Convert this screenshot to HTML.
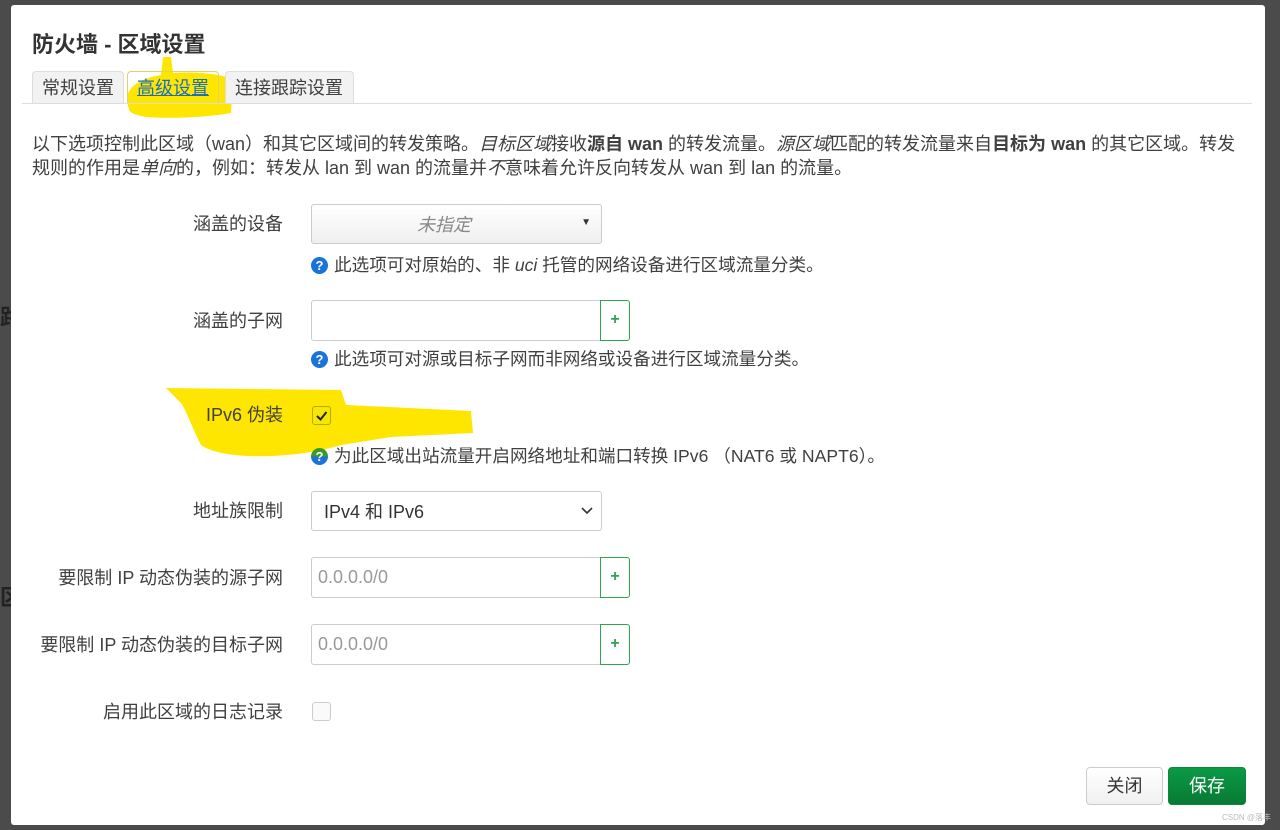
<!DOCTYPE html>
<html><head><meta charset="utf-8"><style>
*{box-sizing:border-box;margin:0;padding:0}
body{width:1280px;height:830px;background:#4b4b4b;position:relative;overflow:hidden;font-family:"Liberation Sans","Noto Sans CJK SC",sans-serif;color:#404040;font-size:18px}
.a{position:absolute;white-space:nowrap}
#m{position:absolute;left:11px;top:5px;width:1254px;height:820px;background:#fff;border-radius:3px}
.lbl{position:absolute;right:982px;font-size:18px;color:#404040;text-align:right;line-height:20px}
.sel{position:absolute;left:300px;width:291px;height:40px;border:1px solid #ccc;border-radius:3px;background:#fff}
.inp{position:absolute;left:300px;width:290px;height:41px;border:1px solid #ccc;border-right:none;border-radius:3px 0 0 3px;color:#999;font-size:18px;padding:8px 6px;line-height:22px}
.plus{position:absolute;left:589px;width:30px;height:41px;border:1px solid #2ea44f;border-radius:0 3px 3px 0;color:#2ea44f;text-align:center;line-height:38px;font-size:16px;font-weight:bold}
.help{position:absolute;left:300px;font-size:17.6px;color:#404040;line-height:20px}
.q{display:inline-block;width:17px;height:17px;border-radius:50%;background:#1a73d9;color:#fff;font-size:13px;font-weight:bold;text-align:center;line-height:17px;vertical-align:1px;margin-right:6px}
.cb{position:absolute;left:301px;width:19px;height:19px;border:1px solid #ccc;border-radius:3px;background:#fafafa}
.tab{position:absolute;top:66px;height:33px;border:1px solid #ddd;border-bottom:none;border-radius:4px 4px 0 0;background:#f2f2f2;font-size:18px;padding:5px 9px;color:#404040;line-height:22px}
</style></head><body>
<div class="a" style="left:0;top:300px;font-size:22px;color:#222;font-weight:bold">路</div>
<div class="a" style="left:0;top:580px;font-size:22px;color:#222;font-weight:bold">区</div>
<div id="m">
<svg class="a" style="left:0;top:0" width="1254" height="820">
<path d="M118 104 C112 88 120 75 150 70 L152 52 L160 52 L162 68 C190 66 212 70 222 74 L220 108 C200 112 160 114 135 112 C125 110 118 108 118 104Z" fill="#ffe600"/>
<path d="M155 383 L330 385 L335 400 L460 406 L462 428 L380 432 L330 440 C280 455 210 455 190 440 C180 420 175 405 170 398 Z" fill="#ffe600"/>
</svg>
<div class="a" style="left:21px;top:22px;font-size:22px;font-weight:bold;color:#333">防火墙 - 区域设置</div>
<div class="tab" style="left:21px;width:92px">常规设置</div>
<div class="tab" style="left:116px;width:92px;background:transparent;border-color:#e0d070"><span style="color:#1a6fc0;text-decoration:underline">高级设置</span></div>
<div class="tab" style="left:214px;width:129px">连接跟踪设置</div>
<div class="a" style="left:11px;top:98px;width:1230px;height:1px;background:#ddd"></div>
<div class="a" style="left:21px;top:127px;font-size:18px;line-height:24px">以下选项控制此区域（wan）和其它区域间的转发策略。<i>目标区域</i>接收<b>源自 wan</b> 的转发流量。<i>源区域</i>匹配的转发流量来自<b>目标为 wan</b> 的其它区域。转发<br>规则的作用是<i>单向</i>的，例如：转发从 lan 到 wan 的流量并<i>不</i>意味着允许反向转发从 wan 到 lan 的流量。</div>

<div class="lbl" style="top:209px">涵盖的设备</div>
<div class="sel" style="top:199px;background:linear-gradient(#fff,#efefef)"><span class="a" style="left:105px;top:6px;font-size:18px;color:#888;font-style:italic">未指定</span><span class="a" style="right:10px;top:12px;font-size:10px;color:#333">▼</span></div>
<div class="help" style="top:250px"><span class="q">?</span>此选项可对原始的、非 <i>uci</i> 托管的网络设备进行区域流量分类。</div>

<div class="lbl" style="top:306px">涵盖的子网</div>
<div class="inp" style="top:295px"></div><div class="plus" style="top:295px">+</div>
<div class="help" style="top:344px"><span class="q">?</span>此选项可对源或目标子网而非网络或设备进行区域流量分类。</div>

<div class="lbl" style="top:400px">IPv6 伪装</div>
<div class="cb" style="top:401px;border-color:#b5a800;background:#f4e800"><svg width="17" height="17" style="position:absolute;left:0;top:0"><path d="M4 9 L7.5 12.5 L13.5 5" stroke="#222" stroke-width="2" fill="none"/></svg></div>
<div class="help" style="top:441px"><span class="q" style="background:linear-gradient(#3a9a2a 50%,#1a73d9 50%)">?</span>为此区域出站流量开启网络地址和端口转换 IPv6 （NAT6 或 NAPT6）。</div>

<div class="lbl" style="top:496px">地址族限制</div>
<div class="sel" style="top:486px"><span class="a" style="left:12px;top:6px;font-size:18px;color:#333">IPv4 和 IPv6</span><svg class="a" style="right:8px;top:14px" width="12" height="10"><path d="M1 2 L6 7 L11 2" stroke="#333" stroke-width="1.6" fill="none"/></svg></div>

<div class="lbl" style="top:563px">要限制 IP 动态伪装的源子网</div>
<div class="inp" style="top:552px">0.0.0.0/0</div><div class="plus" style="top:552px">+</div>

<div class="lbl" style="top:630px">要限制 IP 动态伪装的目标子网</div>
<div class="inp" style="top:619px">0.0.0.0/0</div><div class="plus" style="top:619px">+</div>

<div class="lbl" style="top:697px">启用此区域的日志记录</div>
<div class="cb" style="top:697px"></div>

<div class="a" style="left:1075px;top:762px;width:77px;height:38px;border:1px solid #ccc;border-radius:4px;background:linear-gradient(#fff,#f0f0f0);text-align:center;line-height:36px;font-size:18px;color:#333">关闭</div>
<div class="a" style="left:1157px;top:762px;width:78px;height:38px;border:1px solid #0a8a3a;border-radius:4px;background:linear-gradient(#0b9a45,#087a34);text-align:center;line-height:36px;font-size:18px;color:#fff">保存</div>
</div>
<div class="a" style="left:1222px;top:812px;font-size:8px;color:#bbb">CSDN @落丰</div>
</body></html>
